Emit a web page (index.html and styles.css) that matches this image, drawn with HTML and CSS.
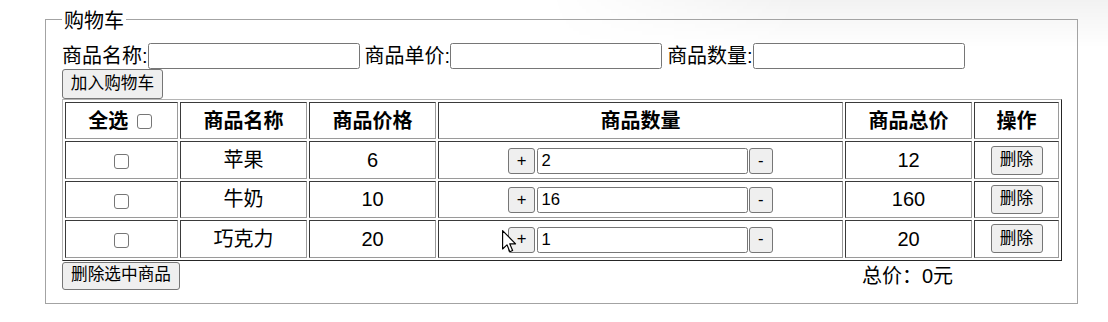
FILE: index.html
```html
<!DOCTYPE html>
<html lang="zh-CN">
<head>
<meta charset="utf-8">
<title>购物车</title>
<link rel="stylesheet" href="styles.css">
</head>
<body>
<div class="glare"></div>
<div class="page">
  <fieldset class="cart">
    <legend class="cart-title">购物车</legend>
    <div class="form-row">
      <label class="field">商品名称:<input type="text" class="text-input"></label>
      <label class="field">商品单价:<input type="text" class="text-input"></label>
      <label class="field">商品数量:<input type="text" class="text-input"></label>
    </div>
    <div class="add-row"><button class="btn btn-add">加入购物车</button></div>
    <table class="cart-table">
      <thead>
        <tr>
          <th class="c-check">全选 <input type="checkbox" class="check"></th>
          <th class="c-name">商品名称</th>
          <th class="c-price">商品价格</th>
          <th class="c-qty">商品数量</th>
          <th class="c-total">商品总价</th>
          <th class="c-op">操作</th>
        </tr>
      </thead>
      <tbody>
        <tr>
          <td><input type="checkbox" class="check"></td>
          <td>苹果</td>
          <td>6</td>
          <td><div class="qty"><button class="btn btn-plus">+</button><input type="text" class="qty-input" value="2"><button class="btn btn-minus">-</button></div></td>
          <td>12</td>
          <td><button class="btn btn-del">删除</button></td>
        </tr>
        <tr>
          <td><input type="checkbox" class="check"></td>
          <td>牛奶</td>
          <td>10</td>
          <td><div class="qty"><button class="btn btn-plus">+</button><input type="text" class="qty-input" value="16"><button class="btn btn-minus">-</button></div></td>
          <td>160</td>
          <td><button class="btn btn-del">删除</button></td>
        </tr>
        <tr>
          <td><input type="checkbox" class="check"></td>
          <td>巧克力</td>
          <td>20</td>
          <td><div class="qty"><button class="btn btn-plus">+</button><input type="text" class="qty-input" value="1"><button class="btn btn-minus">-</button></div></td>
          <td>20</td>
          <td><button class="btn btn-del">删除</button></td>
        </tr>
      </tbody>
    </table>
    <div class="footer">
      <button class="btn btn-remove">删除选中商品</button>
      <span class="total">总价：0元</span>
    </div>
  </fieldset>
</div>
<svg class="cursor" width="15" height="23" viewBox="0 0 13 20">
  <path d="M0.5 0.5 L0.5 16.5 L4.3 12.9 L6.8 18.9 L9.2 17.9 L6.7 12 L11.8 12 Z" fill="#fff" stroke="#000" stroke-width="1" stroke-linejoin="round"/>
</svg>
</body>
</html>
```

FILE: styles.css
```css
html, body {
  margin: 0;
  background: #fff;
}

body {
  position: relative;
  width: 1108px;
  height: 322px;
  overflow: hidden;
  font-family: "Liberation Sans", "Noto Sans CJK SC", sans-serif;
  font-size: 20px;
  color: #000;
}

.glare {
  position: absolute;
  top: 0;
  right: 0;
  width: 560px;
  height: 50px;
  background: linear-gradient(to bottom, rgba(0, 0, 0, 0.05), rgba(0, 0, 0, 0) 48px);
  -webkit-mask-image: linear-gradient(to right, transparent, #000 45%);
  mask-image: linear-gradient(to right, transparent, #000 45%);
}

.page {
  position: relative;
  padding: 5px 0 0 45px;
}

.cart {
  box-sizing: border-box;
  width: 1033px;
  min-width: 0;
  margin: 0;
  border: 1px solid #a3a3a3;
  padding: 8px 16px 13px 16px;
}

.cart-title {
  padding: 3px 2px 0 2px;
  font-size: 20px;
  line-height: 26px;
}

.form-row {
  display: flex;
  align-items: center;
  height: 27px;
}

.field {
  display: flex;
  align-items: center;
  margin-right: 5px;
  line-height: 26px;
}

.text-input {
  box-sizing: border-box;
  width: 212px;
  height: 26px;
  margin: 0;
  padding: 1px 3px;
  border: 1px solid #767676;
  border-radius: 2.5px;
  background: #fff;
  font-family: "Liberation Sans", sans-serif;
  font-size: 16.67px;
}

.add-row {
  display: flex;
  height: 30px;
  align-items: flex-start;
}

.btn {
  box-sizing: border-box;
  margin: 0;
  padding: 0 7px;
  border: 1px solid #767676;
  border-radius: 3px;
  background: #efefef;
  color: #000;
  font-family: "Liberation Sans", "Noto Sans CJK SC", sans-serif;
  font-size: 16.67px;
  line-height: 1;
}

.btn-add {
  width: 101px;
  height: 30px;
}

.cart-table {
  width: 1000px;
  table-layout: fixed;
  border-collapse: separate;
  border-spacing: 2px;
  border: 1px solid;
  border-color: #b4b4b4 #262626 #262626 #b4b4b4;
}

.cart-table th,
.cart-table td {
  box-sizing: border-box;
  height: 37.4px;
  padding: 0;
  border: 1px solid;
  border-color: #3a3a3a #9a9a9a #9a9a9a #3a3a3a;
  text-align: center;
  vertical-align: middle;
  font-size: 20px;
  line-height: 26px;
}

.cart-table th {
  font-weight: bold;
}

.c-check { width: 113px; }
.c-name  { width: 127px; }
.c-price { width: 127px; }
.c-qty   { width: 405px; }
.c-total { width: 127px; }
.c-op    { width: 85px; }

.check {
  -webkit-appearance: none;
  appearance: none;
  box-sizing: border-box;
  width: 15px;
  height: 15px;
  margin: 0 3px 0 3px;
  border: 1px solid #767676;
  border-radius: 3px;
  background: #fff;
  vertical-align: -1px;
}

td .check {
  margin: 0;
  vertical-align: middle;
}

.qty {
  display: inline-flex;
  align-items: center;
  gap: 1.3px;
  vertical-align: middle;
}

.btn-plus,
.btn-minus {
  height: 26px;
  padding: 0;
  text-align: center;
}

.btn-plus { width: 27px; }
.btn-minus { width: 24px; }

.qty-input {
  box-sizing: border-box;
  width: 211px;
  height: 26px;
  margin: 0;
  padding: 1px 4px;
  border: 1px solid #767676;
  border-radius: 2.5px;
  background: #fff;
  font-family: "Liberation Sans", sans-serif;
  font-size: 16.67px;
}

.btn-del {
  width: 52px;
  height: 29px;
  vertical-align: middle;
}

.footer {
  display: flex;
  align-items: center;
  margin-top: 1px;
  height: 28px;
}

.btn-remove {
  width: 118px;
  height: 28px;
}

.total {
  margin-left: 682px;
  line-height: 26px;
}

.cursor {
  position: absolute;
  left: 502px;
  top: 230px;
}
```
